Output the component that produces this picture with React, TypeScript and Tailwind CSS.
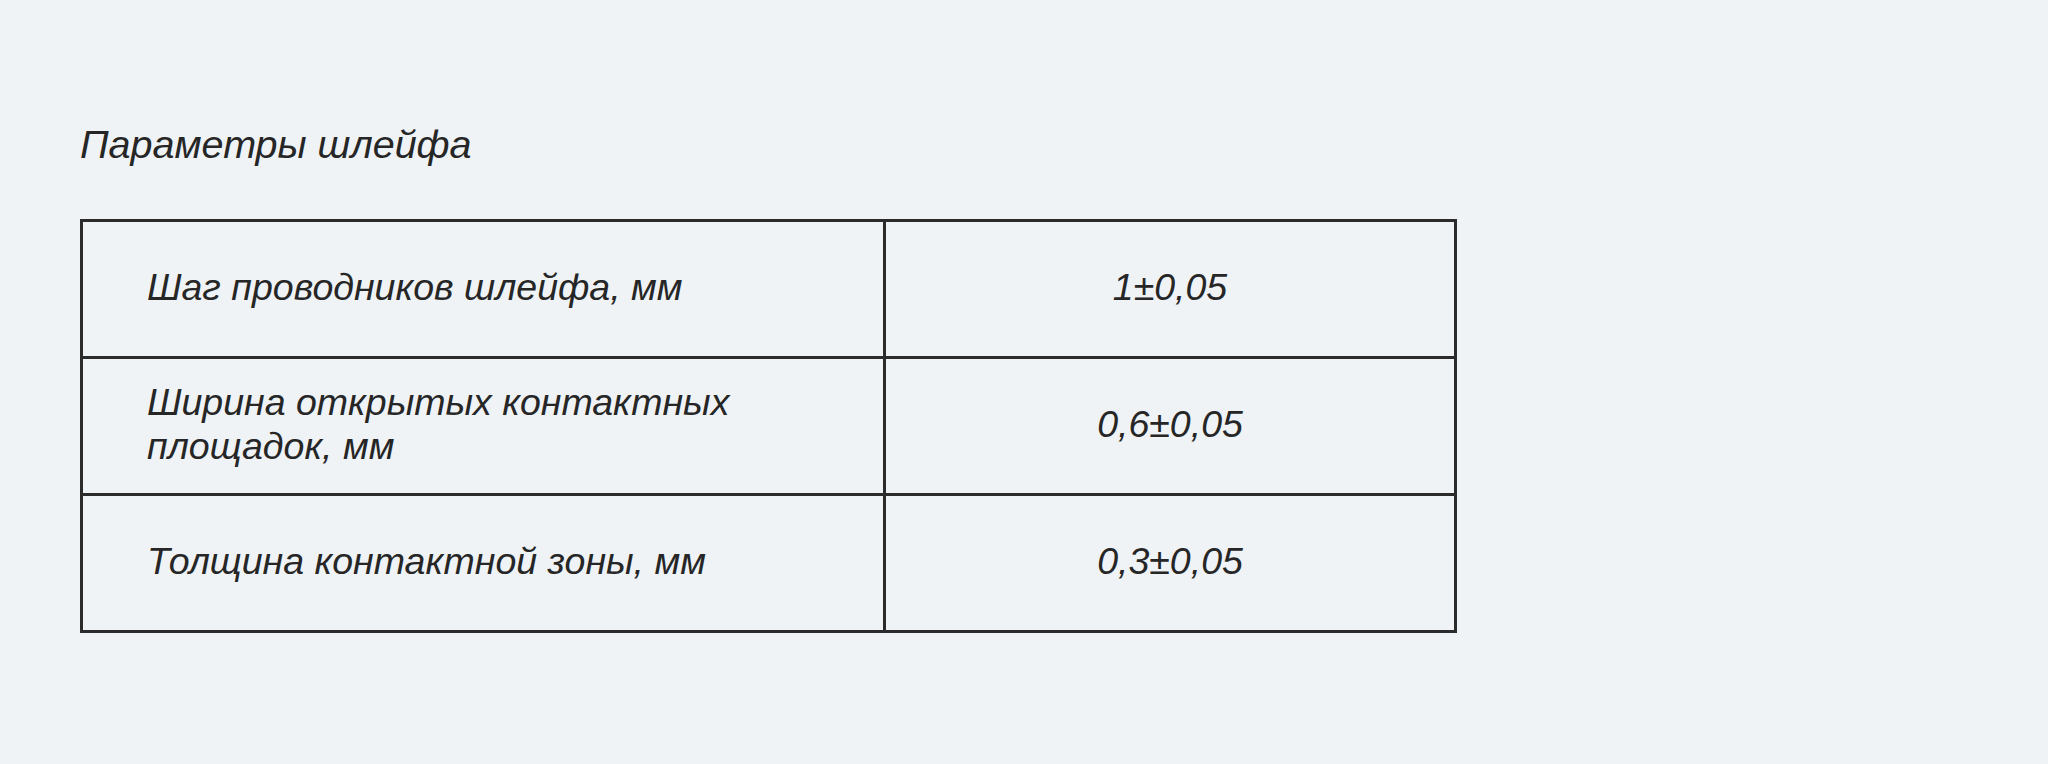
import React from "react";

const rows = [
  { label: "Шаг проводников шлейфа, мм", value: "1±0,05" },
  { label: "Ширина открытых контактных площадок, мм", value: "0,6±0,05" },
  { label: "Толщина контактной зоны, мм", value: "0,3±0,05" },
];

const App = () => {
  return (
    <div className="w-[2048px] h-[764px] bg-[#eff3f6] px-[80px] pt-[120px] text-[#262626] italic font-['Liberation_Sans',Arial,sans-serif]">
      <h1 className="text-[39.5px] leading-[48px] font-normal">Параметры шлейфа</h1>

      <table className="mt-[51px] border-collapse border-[3px] border-[#2b2b2b] w-[1377px]">
        <tbody>
          {rows.map((r) => (
            <tr key={r.value} className="h-[137px]">
              <td className="w-[803px] border-[3px] border-[#2b2b2b] pl-[64px] pr-[110px] pb-[4px] text-[37.5px] leading-[44px] align-middle">
                {r.label}
              </td>
              <td className="border-[3px] border-[#2b2b2b] pb-[4px] text-center text-[37.5px] leading-[44px] align-middle">
                {r.value}
              </td>
            </tr>
          ))}
        </tbody>
      </table>
    </div>
  );
};

export default App;
